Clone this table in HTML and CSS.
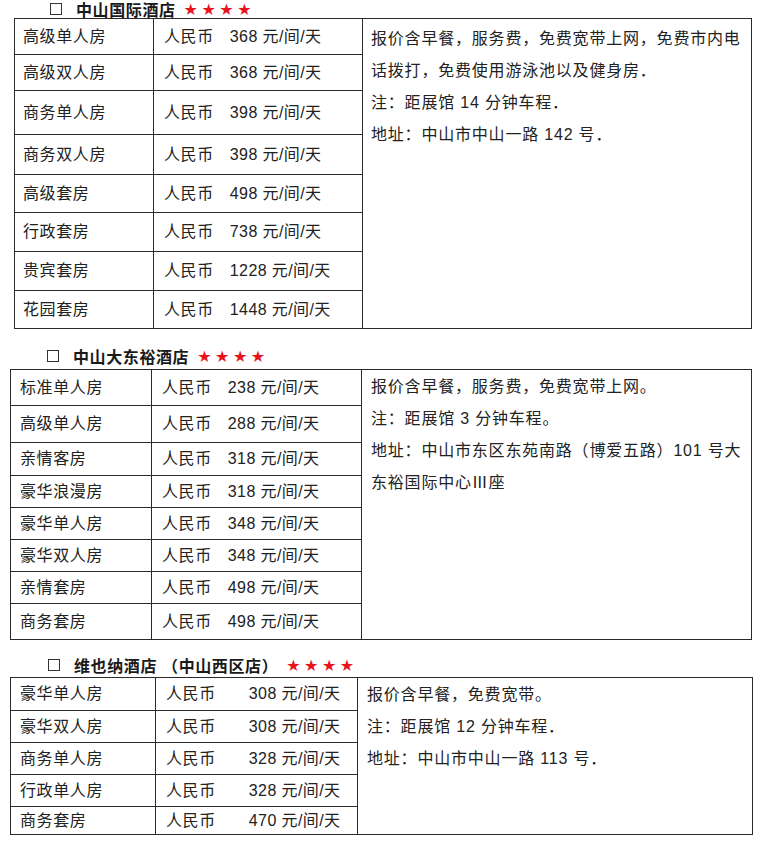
FILE: index.html
```html
<!DOCTYPE html>
<html lang="zh-CN">
<head>
<meta charset="utf-8">
<title>中山酒店价目</title>
<link rel="stylesheet" href="styles.css">
</head>
<body>
<section class="hotel hotel-1">
  <div class="title"><span class="box"></span><span class="name">中山国际酒店</span><span class="stars">★★★★</span></div>
  <table class="rates">
    <colgroup><col class="c1"><col class="c2"><col class="c3"></colgroup>
    <tr class="h36"><td>高级单人房</td><td>人民币<span class="amt">368 元/间/天</span></td>
      <td class="info" rowspan="8">报价含早餐，服务费，免费宽带上网，免费市内电<br>话拨打，免费使用游泳池以及健身房．<br>注：距展馆 14 分钟车程．<br>地址：中山市中山一路 142 号．</td></tr>
    <tr class="h36"><td>高级双人房</td><td>人民币<span class="amt">368 元/间/天</span></td></tr>
    <tr class="h44"><td>商务单人房</td><td>人民币<span class="amt">398 元/间/天</span></td></tr>
    <tr class="h40"><td>商务双人房</td><td>人民币<span class="amt">398 元/间/天</span></td></tr>
    <tr class="h38"><td>高级套房</td><td>人民币<span class="amt">498 元/间/天</span></td></tr>
    <tr class="h39"><td>行政套房</td><td>人民币<span class="amt">738 元/间/天</span></td></tr>
    <tr class="h39"><td>贵宾套房</td><td>人民币<span class="amt">1228 元/间/天</span></td></tr>
    <tr class="h38"><td>花园套房</td><td>人民币<span class="amt">1448 元/间/天</span></td></tr>
  </table>
</section>

<section class="hotel hotel-2">
  <div class="title"><span class="box"></span><span class="name">中山大东裕酒店</span><span class="stars">★★★★</span></div>
  <table class="rates">
    <colgroup><col class="c1"><col class="c2"><col class="c3"></colgroup>
    <tr class="h36"><td>标准单人房</td><td>人民币<span class="amt">238 元/间/天</span></td>
      <td class="info" rowspan="8">报价含早餐，服务费，免费宽带上网。<br>注：距展馆 3 分钟车程。<br>地址：中山市东区东苑南路（博爱五路）101 号大<br>东裕国际中心Ⅲ座</td></tr>
    <tr class="h37"><td>高级单人房</td><td>人民币<span class="amt">288 元/间/天</span></td></tr>
    <tr class="h33"><td>亲情客房</td><td>人民币<span class="amt">318 元/间/天</span></td></tr>
    <tr class="h32"><td>豪华浪漫房</td><td>人民币<span class="amt">318 元/间/天</span></td></tr>
    <tr class="h32"><td>豪华单人房</td><td>人民币<span class="amt">348 元/间/天</span></td></tr>
    <tr class="h32"><td>豪华双人房</td><td>人民币<span class="amt">348 元/间/天</span></td></tr>
    <tr class="h32"><td>亲情套房</td><td>人民币<span class="amt">498 元/间/天</span></td></tr>
    <tr class="h36"><td>商务套房</td><td>人民币<span class="amt">498 元/间/天</span></td></tr>
  </table>
</section>

<section class="hotel hotel-3">
  <div class="title"><span class="box"></span><span class="name">维也纳酒店 （中山西区店）</span><span class="stars">★★★★</span></div>
  <table class="rates">
    <colgroup><col class="c1"><col class="c2"><col class="c3"></colgroup>
    <tr class="h33"><td>豪华单人房</td><td>人民币<span class="amt">308 元/间/天</span></td>
      <td class="info" rowspan="5">报价含早餐，免费宽带。<br>注：距展馆 12 分钟车程．<br>地址：中山市中山一路 113 号．</td></tr>
    <tr class="h32"><td>豪华双人房</td><td>人民币<span class="amt">308 元/间/天</span></td></tr>
    <tr class="h32"><td>商务单人房</td><td>人民币<span class="amt">328 元/间/天</span></td></tr>
    <tr class="h32"><td>行政单人房</td><td>人民币<span class="amt">328 元/间/天</span></td></tr>
    <tr class="h28"><td>商务套房</td><td>人民币<span class="amt">470 元/间/天</span></td></tr>
  </table>
</section>
</body>
</html>
```

FILE: styles.css
```css
html, body {
  margin: 0;
  padding: 0;
  background: #fff;
}

body {
  font-family: "Liberation Sans", "Noto Sans CJK SC", sans-serif;
  font-size: 16px;
  color: #222;
}

.hotel {
  display: block;
}

.hotel-1 { margin-left: 14px; }
.hotel-2 { margin-left: 10px; margin-top: 14px; }
.hotel-3 { margin-left: 10px; margin-top: 13px; }

.title {
  display: flex;
  align-items: center;
  height: 24px;
  font-weight: bold;
  letter-spacing: 0.6px;
  color: #1a1a1a;
}

.hotel-1 .title { height: 18px; padding-left: 36px; }
.hotel-2 .title { height: 26px; padding-left: 37px; }
.hotel-3 .title { height: 24px; padding-left: 38px; }

.box {
  width: 10px;
  height: 10px;
  border: 1px solid #333;
  margin-right: 14px;
  flex: none;
}

.stars {
  font-family: "DejaVu Sans", sans-serif;
  font-size: 16px;
  color: #e8141b;
  letter-spacing: 3.5px;
  margin-left: 8px;
  font-weight: normal;
}

.rates {
  border-collapse: collapse;
  table-layout: fixed;
}

.rates td {
  border: 1px solid #2a2a2a;
  padding: 0 0 0 9px;
  white-space: nowrap;
  vertical-align: middle;
  letter-spacing: 0.6px;
  line-height: 20px;
}

.hotel-1 .rates { width: 737px; }
.hotel-1 .c1 { width: 139px; }
.hotel-1 .c2 { width: 209px; }
.hotel-1 .c3 { width: 389px; }
.hotel-1 .rates td { padding-left: 8px; }

.hotel-2 .rates { width: 741px; }
.hotel-2 .c1 { width: 141px; }
.hotel-2 .c2 { width: 210px; }
.hotel-2 .c3 { width: 390px; }

.hotel-3 .rates { width: 742px; }
.hotel-3 .c1 { width: 145px; }
.hotel-3 .c2 { width: 202px; }
.hotel-3 .c3 { width: 395px; }

.rates td:nth-child(2) { padding-left: 10px; }

.amt {
  margin-left: 16px;
  letter-spacing: 0.4px;
}

.hotel-3 .amt { margin-left: 33px; }

.rates td.info {
  vertical-align: top;
  line-height: 32px;
  padding: 1px 0 0 9px;
  letter-spacing: 0.8px;
}

.hotel-1 .rates td.info { padding: 4px 0 0 8px; }

.h28 { height: 28px; }
.h32 { height: 32px; }
.h33 { height: 33px; }
.h36 { height: 36px; }
.h37 { height: 37px; }
.h38 { height: 38px; }
.h39 { height: 39px; }
.h40 { height: 40px; }
.h44 { height: 44px; }
```
